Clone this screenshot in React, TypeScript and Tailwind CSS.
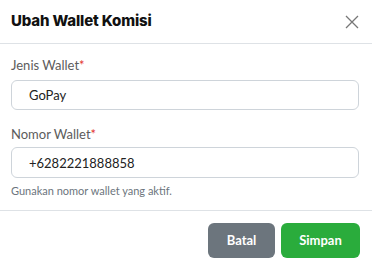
import React, { useState } from 'react';

export default function App() {
  const [jenis, setJenis] = useState('GoPay');
  const [nomor, setNomor] = useState('+6282221888858');

  return (
    <div className="h-[269px] w-[372px] overflow-hidden bg-white font-['Lato',sans-serif] text-[#212529]">
      <div className="flex h-[44px] items-center justify-between border-b border-[#dee2e6] pl-[11px] pr-[12px]">
        <h2 className="font-['Inter',sans-serif] text-[15px] font-extrabold tracking-[-0.01em] text-[#111]">
          Ubah Wallet Komisi
        </h2>
        <button className="flex h-[16px] w-[16px] items-center justify-center text-[#777]">
          <svg width="14" height="14" viewBox="0 0 14 14" fill="none" stroke="currentColor" strokeWidth="1.3">
            <path d="M1 1L13 13M13 1L1 13" />
          </svg>
        </button>
      </div>

      <div className="border-b border-[#dee2e6] pb-[12px] pl-[11px] pr-[13px] pt-[12px]">
        <label className="block text-[13px] leading-[18px] text-[#5c5c5c]">
          Jenis Wallet<span className="text-[#e3342f]">*</span>
        </label>
        <input
          value={jenis}
          onChange={e => setJenis(e.target.value)}
          className="mt-[6px] block h-[30px] w-full rounded-[6px] border border-[#ced4da] px-[17px] text-[13px] text-[#222] outline-none"
        />

        <label className="mt-[15px] block text-[13px] leading-[18px] text-[#5c5c5c]">
          Nomor Wallet<span className="text-[#e3342f]">*</span>
        </label>
        <input
          value={nomor}
          onChange={e => setNomor(e.target.value)}
          className="mt-[4px] block h-[31px] w-full rounded-[6px] border border-[#ced4da] px-[17px] text-[13px] text-[#222] outline-none"
        />
        <p className="mt-[5px] text-[11px] leading-[15px] text-[#6c757d]">Gunakan nomor wallet yang aktif.</p>
      </div>

      <div className="flex justify-end gap-[6px] pr-[12px] pt-[12px]">
        <button className="h-[35px] w-[67px] rounded-[6px] bg-[#6c757d] text-[13px] font-bold text-white">Batal</button>
        <button className="h-[35px] w-[79px] rounded-[6px] bg-[#2aac3c] text-[13px] font-bold text-white">Simpan</button>
      </div>
    </div>
  );
}
